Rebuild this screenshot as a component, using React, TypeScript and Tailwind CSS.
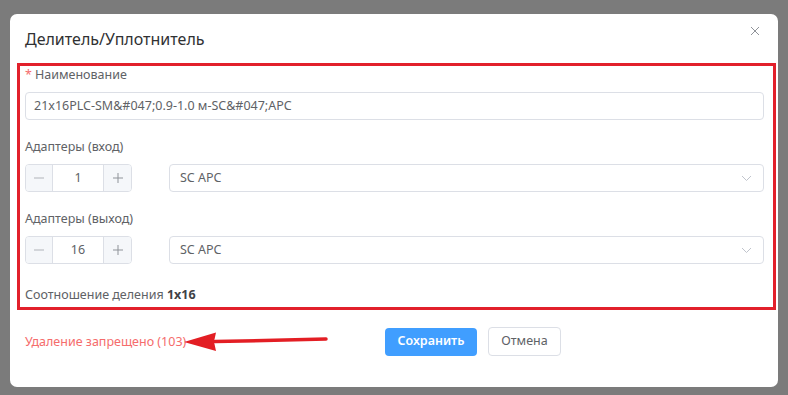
export default function App() {
  const font = { fontFamily: '"Noto Sans", "Open Sans", sans-serif' };
  return (
    <div className="w-[788px] h-[395px] bg-[#7b7b7b] pt-[14px] pl-[10px] overflow-hidden" style={font}>
      <div className="w-[768px] h-[373px] bg-white rounded-[7px] flex flex-col">
        {/* header */}
        <div className="h-[49px] flex items-center justify-between pl-[15px] pr-[18px] pb-[1px]">
          <span className="text-[16px] leading-[20px] text-[#303133] pt-[2px]">Делитель/Уплотнитель</span>
          <svg width="10" height="10" viewBox="0 0 10 10" className="mb-[14px]">
            <path d="M1 1L9 9M9 1L1 9" stroke="#909399" strokeWidth="1" />
          </svg>
        </div>

        {/* form (highlighted) */}
        <div className="ml-[7px] w-[759px] h-[247px] border-[3px] border-[#e2202b] pl-[5px] pr-[9px] text-[12.5px] text-[#606266]">
          <div className="h-[18px] leading-[18px]">
            <span className="text-[#f56c6c] mr-[3px]">*</span>Наименование
          </div>
          <div className="mt-[8px] h-[28px] border border-[#dcdfe6] rounded-[4px] flex items-center px-[8px] leading-none">
            21x16PLC-SM&amp;#047;0.9-1.0 м-SC&amp;#047;APC
          </div>

          <div className="mt-[18px] h-[18px] leading-[18px]">Адаптеры (вход)</div>
          <AdapterRow value="1" />

          <div className="mt-[18px] h-[18px] leading-[18px]">Адаптеры (выход)</div>
          <AdapterRow value="16" />

          <div className="mt-[22px] h-[18px] leading-[18px]">
            Соотношение деления <b className="font-bold text-[#404246]">1x16</b>
          </div>
        </div>

        {/* footer */}
        <div className="mt-[17px] flex items-center pl-[15px] relative">
          <div className="w-[360px] text-[12.5px] text-[#f56c6c] leading-[18px]">Удаление запрещено (103)</div>
          <button className="h-[28px] w-[92px] rounded-[4px] bg-[#409eff] text-white text-[12.5px] font-semibold">
            Сохранить
          </button>
          <button className="ml-[11px] h-[29px] w-[73px] rounded-[4px] border border-[#dcdfe6] bg-white text-[#606266] text-[12.5px]">
            Отмена
          </button>
          <svg className="absolute left-[173px] top-[2px]" width="146" height="24" viewBox="0 0 146 24">
            <path d="M32 12.6L143 10" stroke="#e31e24" strokeWidth="3.5" strokeLinecap="round" />
            <path d="M1 13L33 3.5L31 12.8L33 22Z" fill="#e31e24" />
          </svg>
        </div>
      </div>
    </div>
  );
}

function AdapterRow({ value }: { value: string }) {
  return (
    <div className="mt-[8px] flex items-center">
      <div className="w-[107px] h-[28px] border border-[#dcdfe6] rounded-[4px] flex overflow-hidden">
        <div className="w-[27px] bg-[#f5f7fa] border-r border-[#dcdfe6] flex items-center justify-center">
          <svg width="12" height="12" viewBox="0 0 12 12">
            <path d="M1 6H11" stroke="#b0b3b9" strokeWidth="1" />
          </svg>
        </div>
        <div className="flex-1 flex items-center justify-center text-[#606266]">{value}</div>
        <div className="w-[28px] bg-[#f5f7fa] border-l border-[#dcdfe6] flex items-center justify-center">
          <svg width="12" height="12" viewBox="0 0 12 12">
            <path d="M1 6H11M6 1V11" stroke="#8f9399" strokeWidth="1" />
          </svg>
        </div>
      </div>
      <div className="ml-[37px] flex-1 h-[28px] border border-[#dcdfe6] rounded-[4px] flex items-center justify-between pl-[10px] pr-[11px]">
        <span>SC APC</span>
        <svg width="11" height="7" viewBox="0 0 11 7">
          <path d="M1 1L5.5 5.5L10 1" stroke="#c0c4cc" strokeWidth="1" fill="none" />
        </svg>
      </div>
    </div>
  );
}
